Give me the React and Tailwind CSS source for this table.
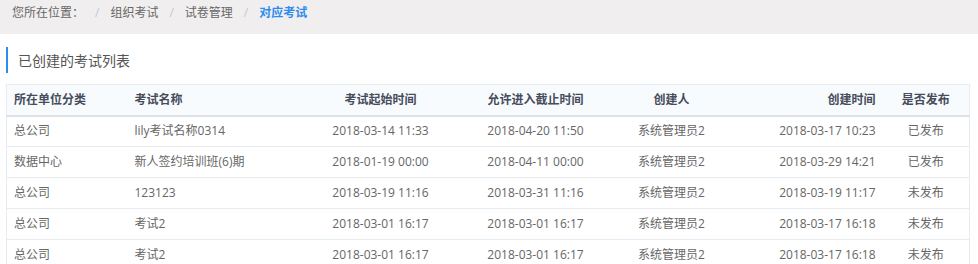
import React from "react";

const rows = [
  ["总公司", "lily考试名称0314", "2018-03-14 11:33", "2018-04-20 11:50", "系统管理员2", "2018-03-17 10:23", "已发布"],
  ["数据中心", "新人签约培训班(6)期", "2018-01-19 00:00", "2018-04-11 00:00", "系统管理员2", "2018-03-29 14:21", "已发布"],
  ["总公司", "123123", "2018-03-19 11:16", "2018-03-31 11:16", "系统管理员2", "2018-03-19 11:17", "未发布"],
  ["总公司", "考试2", "2018-03-01 16:17", "2018-03-01 16:17", "系统管理员2", "2018-03-17 16:18", "未发布"],
  ["总公司", "考试2", "2018-03-01 16:17", "2018-03-01 16:17", "系统管理员2", "2018-03-17 16:18", "未发布"],
];

const font = { fontFamily: '"Open Sans", "Noto Sans CJK SC", sans-serif' };

export default function App() {
  return (
    <div className="w-[978px] h-[264px] overflow-hidden bg-white text-[12px]" style={font}>
      <div className="h-[34px] bg-[#f0eeee] pl-[12px] pt-[4px] flex items-start leading-[18px] text-[#666]">
        <span>您所在位置：</span>
        <span className="px-[11px] text-[#c8c8c8]">/</span>
        <span>组织考试</span>
        <span className="px-[11px] text-[#c8c8c8]">/</span>
        <span>试卷管理</span>
        <span className="px-[11px] text-[#c8c8c8]">/</span>
        <span className="text-[#2d8cf0] font-bold">对应考试</span>
      </div>
      <div className="pl-[6px] pr-[9px]">
        <div className="mt-[13px] h-[26px] border-l-2 border-[#2d8cf0] pl-[10px] flex items-center text-[14px] text-[#555]">
          已创建的考试列表
        </div>
        <table className="mt-[11px] w-[963px] table-fixed border-collapse border-l border-r border-t border-[#e9ecef]">
          <colgroup>
            <col className="w-[121px]" />
            <col className="w-[173px]" />
            <col className="w-[160px]" />
            <col className="w-[150px]" />
            <col className="w-[122px]" />
            <col className="w-[150px]" />
            <col className="w-[87px]" />
          </colgroup>
          <thead>
            <tr className="h-[31px] bg-[#f8fbfe] border-b-2 border-[#dfe3e8] text-[#464c5b] font-bold">
              <th className="px-[7px] text-left font-bold">所在单位分类</th>
              <th className="px-[7px] text-left font-bold">考试名称</th>
              <th className="px-[7px] text-center font-bold">考试起始时间</th>
              <th className="px-[7px] text-center font-bold">允许进入截止时间</th>
              <th className="px-[7px] text-center font-bold">创建人</th>
              <th className="px-[7px] text-right font-bold">创建时间</th>
              <th className="px-[7px] text-center font-bold">是否发布</th>
            </tr>
          </thead>
          <tbody className="text-[#666]">
            {rows.map((r, i) => (
              <tr key={i} className="h-[31px] border-b border-[#e9ecef]">
                <td className="px-[7px] text-left whitespace-nowrap">{r[0]}</td>
                <td className="px-[7px] text-left whitespace-nowrap">{r[1]}</td>
                <td className="px-[7px] text-center whitespace-nowrap">{r[2]}</td>
                <td className="px-[7px] text-center whitespace-nowrap">{r[3]}</td>
                <td className="px-[7px] text-center whitespace-nowrap">{r[4]}</td>
                <td className="px-[7px] text-right whitespace-nowrap">{r[5]}</td>
                <td className="px-[7px] text-center whitespace-nowrap">{r[6]}</td>
              </tr>
            ))}
          </tbody>
        </table>
      </div>
    </div>
  );
}
